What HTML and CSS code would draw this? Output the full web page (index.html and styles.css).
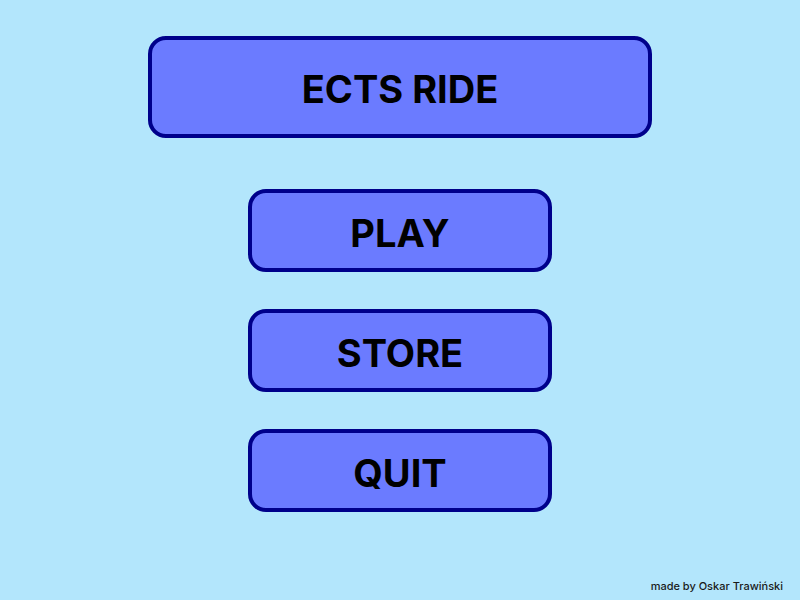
FILE: index.html
```html
<!DOCTYPE html>
<html>
<head>
<meta charset="utf-8">
<link rel="stylesheet" href="styles.css">
</head>
<body>
<div class="screen">
  <div class="title">ECTS RIDE</div>
  <div class="menu">
    <div class="btn">PLAY</div>
    <div class="btn">STORE</div>
    <div class="btn">QUIT</div>
  </div>
  <div class="credit">made by Oskar Trawiński</div>
</div>
</body>
</html>
```
FILE: styles.css
```css
html, body {
  margin: 0;
  padding: 0;
}
body {
  background: #b3e6fc;
  font-family: Inter, "Liberation Sans", sans-serif;
  color: #000;
}
.screen {
  width: 800px;
  height: 600px;
  display: flex;
  flex-direction: column;
  align-items: center;
  box-sizing: border-box;
  padding-top: 36px;
}
.title {
  width: 504px;
  height: 102px;
  box-sizing: border-box;
  border: 4px solid #00008b;
  border-radius: 18px;
  background: #6b7bff;
  display: flex;
  align-items: center;
  justify-content: center;
  padding-top: 3px;
  font-size: 38px;
  font-weight: 700;
}
.menu {
  margin-top: 51px;
  display: flex;
  flex-direction: column;
  gap: 37px;
}
.btn {
  width: 304px;
  height: 83px;
  box-sizing: border-box;
  border: 4px solid #00008b;
  border-radius: 18px;
  background: #6b7bff;
  display: flex;
  align-items: center;
  justify-content: center;
  padding-top: 4px;
  font-size: 38px;
  font-weight: 700;
}
.credit {
  margin-top: auto;
  align-self: flex-end;
  margin-right: 17px;
  margin-bottom: 7px;
  font-size: 11px;
  font-weight: 500;
  color: #1a1a1a;
}
```
